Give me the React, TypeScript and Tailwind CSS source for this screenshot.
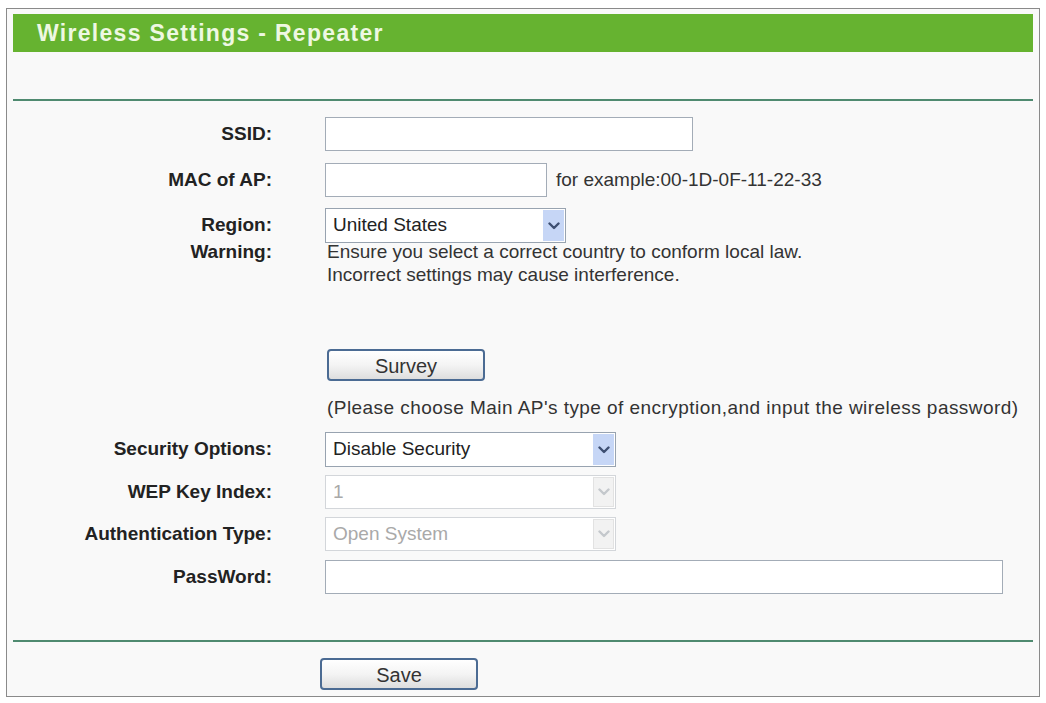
import React from 'react';

function Chevron({ muted }: { muted?: boolean }) {
    return (
        <svg width="12" height="8" viewBox="0 0 12 8">
            <path d="M1.5 1.5 L6 6 L10.5 1.5" fill="none" stroke={muted ? '#c4c8cc' : '#3e4f72'} strokeWidth="2.4" strokeLinecap="round" strokeLinejoin="round" />
        </svg>
    );
}

function FakeSelect({ value, width, disabled }: { value: string; width: string; disabled?: boolean }) {
    return (
        <div className={`flex items-stretch border bg-white ${width} ${disabled ? 'h-[34px] border-[#d3d6da] text-[#a9a9a9]' : 'h-[35px] border-[#98a3b0] text-[#222]'}`}>
            <div className="flex flex-1 items-center pl-[7px]">{value}</div>
            <div className={`m-[1px] flex w-[21px] items-center justify-center ${disabled ? 'border border-[#e2e2e2] bg-[#f2f2f2]' : 'bg-[#c6d6f6]'}`}>
                <Chevron muted={disabled} />
            </div>
        </div>
    );
}

function Row({ label, children, className = '' }: { label: string; children: React.ReactNode; className?: string }) {
    return (
        <div className={`flex items-center ${className}`}>
            <div className="w-[259px] shrink-0 text-right font-bold text-[#222]">{label}</div>
            <div className="ml-[53px] flex items-center">{children}</div>
        </div>
    );
}

function Btn({ text }: { text: string }) {
    return (
        <button className="h-[32px] w-[158px] rounded-[4px] border-2 border-[#4b6b93] bg-gradient-to-b from-white via-[#f4f4f4] to-[#dedede] text-[20px] text-[#333]">
            {text}
        </button>
    );
}

export default function App() {
    return (
        <div className="min-h-screen bg-white pl-[6px] pt-[8px]" style={{ fontFamily: '"Liberation Sans", Arial, sans-serif' }}>
            <div className="h-[689px] w-[1034px] border border-[#8a8a8a] bg-[#f9f9f9] px-[6px] pt-[5px] text-[19px]">
                <div className="flex h-[38px] items-center bg-[#66b330] pl-[24px] text-[23px] font-bold tracking-[1.3px] text-[#eef8e2]">
                    Wireless Settings - Repeater
                </div>
                <div className="mt-[47px] h-[2px] bg-[#4f8a70]" />

                <Row label="SSID:" className="mt-[16px]">
                    <input className="h-[34px] w-[368px] border border-[#a3acb7] bg-white" />
                </Row>
                <Row label="MAC of AP:" className="mt-[12px]">
                    <input className="h-[34px] w-[222px] border border-[#a3acb7] bg-white" />
                    <span className="ml-[9px] text-[#333]">for example:00-1D-0F-11-22-33</span>
                </Row>
                <Row label="Region:" className="mt-[11px]">
                    <FakeSelect value="United States" width="w-[241px]" />
                </Row>
                <div className="mt-[-3px] flex items-start leading-[23px]">
                    <div className="w-[259px] shrink-0 text-right font-bold text-[#222]">Warning:</div>
                    <div className="ml-[55px] text-[#333]">
                        Ensure you select a correct country to conform local law.<br />
                        Incorrect settings may cause interference.
                    </div>
                </div>

                <div className="ml-[314px] mt-[63px]">
                    <Btn text="Survey" />
                </div>
                <div className="ml-[314px] mt-[12px] tracking-[0.45px] text-[#333]">
                    (Please choose Main AP's type of encryption,and input the wireless password)
                </div>

                <Row label="Security Options:" className="mt-[10px]">
                    <FakeSelect value="Disable Security" width="w-[291px]" />
                </Row>
                <Row label="WEP Key Index:" className="mt-[8px]">
                    <FakeSelect value="1" width="w-[291px]" disabled />
                </Row>
                <Row label="Authentication Type:" className="mt-[8px]">
                    <FakeSelect value="Open System" width="w-[291px]" disabled />
                </Row>
                <Row label="PassWord:" className="mt-[9px]">
                    <input className="h-[34px] w-[678px] border border-[#a3acb7] bg-white" />
                </Row>

                <div className="mt-[46px] h-[2px] bg-[#4f8a70]" />
                <div className="ml-[307px] mt-[16px]">
                    <Btn text="Save" />
                </div>
            </div>
        </div>
    );
}
